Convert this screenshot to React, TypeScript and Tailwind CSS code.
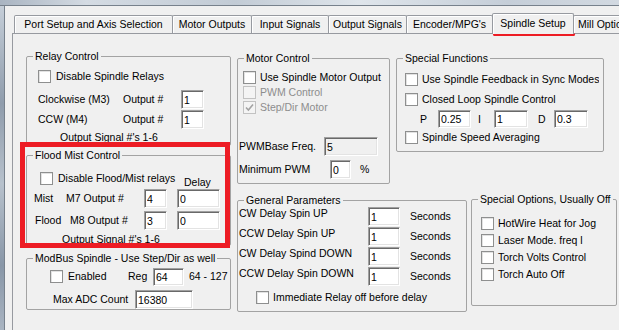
import type { ReactNode } from "react";

const TABS = [
  { label: "Port Setup and Axis Selection", cls: "w-[159px]" },
  { label: "Motor Outputs", cls: "w-[80px]" },
  { label: "Input Signals", cls: "w-[78px]" },
  { label: "Output Signals", cls: "w-[79px]" },
  { label: "Encoder/MPG's", cls: "w-[87px]" },
];

const DELAYS = ["CW Delay Spin UP", "CCW Delay Spin UP", "CW Delay Spind DOWN", "CCW Delay Spin DOWN"];

const SPECIAL_OPTIONS = ["HotWire Heat for Jog", "Laser Mode. freq l", "Torch Volts Control", "Torch Auto Off"];

function Check({ disabled = false, checked = false }: { disabled?: boolean; checked?: boolean }) {
  return (
    <span
      className={`flex h-[13px] w-[13px] shrink-0 items-center justify-center border ${
        disabled ? "border-[#c2c2c2] bg-[#f4f4f4]" : "border-[#8e8f8f] bg-white shadow-[inset_1px_1px_0_#e2e2e2]"
      }`}
    >
      {checked && (
        <svg width="9" height="9" viewBox="0 0 9 9">
          <path d="M1 4.5 3.4 7 8 1.5" fill="none" stroke="#a3a3a3" strokeWidth="1.6" />
        </svg>
      )}
    </span>
  );
}

function CheckRow({ label, disabled = false, checked = false, clip = false }: { label: string; disabled?: boolean; checked?: boolean; clip?: boolean }) {
  return (
    <div className="flex h-[13px] items-center">
      <Check disabled={disabled} checked={checked} />
      <span className={`ml-[4px] whitespace-nowrap ${disabled ? "text-[#8d8d8d]" : ""} ${clip ? "max-w-[181px] overflow-hidden" : ""}`}>{label}</span>
    </div>
  );
}

function Field({ value, className, disabled = false }: { value: string; className: string; disabled?: boolean }) {
  return (
    <input
      readOnly
      defaultValue={value}
      className={`shrink-0 border border-b-white border-l-[#a0a0a0] border-r-white border-t-[#a0a0a0] px-[2px] text-[10.5px] leading-[13px] text-black shadow-[inset_1px_1px_0_#696969,inset_-1px_-1px_0_#e3e3e3] outline-none ${
        disabled ? "bg-[#f0f0f0]" : "bg-white"
      } ${className}`}
    />
  );
}

function Group({ title, className, children }: { title: string; className: string; children?: ReactNode }) {
  return (
    <fieldset className={`min-w-0 shrink-0 rounded-[2px] border border-[#a3a3a3] ${className}`}>
      <legend className="ml-[6px] px-[2px] leading-[13px] whitespace-nowrap">{title}</legend>
      {children}
    </fieldset>
  );
}

export default function App() {
  return (
    <div className="relative h-[330px] w-[619px] overflow-hidden bg-[#f0f0f0] font-['Liberation_Sans',Arial,sans-serif] text-[10.5px] leading-[13px] text-black">
      <div className="h-[5px] bg-[linear-gradient(90deg,#a9b4c1,#d4dbe3_14%,#c2cbd5_38%,#dfe5eb_58%,#c5ced8_82%,#d2d9e1)]" />
      <div className="h-px bg-[#77818c]" />
      <div className="flex h-[324px]">
        <div className="w-[4px] bg-[linear-gradient(180deg,#c5ced8,#8f9cac_30%,#b7c1cc_55%,#8896a7_80%,#a9b4c1)]" />
        <div className="w-px bg-[#77818c]" />
        <div className="min-w-0 flex-1">
          {/* tab strip */}
          <div className="ml-[9px] mt-[7px] flex h-[20px] items-end whitespace-nowrap">
            {TABS.map((tab) => (
              <div
                key={tab.label}
                className={`-mr-px flex h-[18px] shrink-0 items-center justify-center rounded-t-[2px] border border-b-0 border-[#979aa0] bg-[#f0f0f0] shadow-[inset_1px_1px_0_#ffffff] ${tab.cls}`}
              >
                {tab.label}
              </div>
            ))}
            <div className="relative z-10 -mb-px flex h-[21px] w-[82px] shrink-0 items-center justify-center rounded-t-[2px] border border-b-0 border-[#979aa0] bg-[#f0f0f0] pb-px shadow-[inset_1px_1px_0_#ffffff]">
              Spindle Setup
            </div>
            <div className="-ml-px flex h-[18px] w-[90px] shrink-0 items-center rounded-t-[2px] border border-b-0 border-[#979aa0] bg-[#f0f0f0] pl-[4px] shadow-[inset_1px_1px_0_#ffffff]">
              Mill Options
            </div>
          </div>

          {/* tab page */}
          <div className="ml-[7px] h-[300px] border-l border-t border-[#979aa0]">
            <div className="flex pl-[13px]">
              {/* left column */}
              <div className="mt-[16px] flex w-[205px] shrink-0 flex-col">
                <Group title="Relay Control" className="h-[96px] w-[205px]">
                  <div className="ml-[11px] mt-[7px] flex items-center">
                    <Check />
                    <span className="ml-[5px]">Disable Spindle Relays</span>
                  </div>
                  <div className="ml-[11px] mt-[7px] flex h-[19px] items-center">
                    <span className="w-[85px]">Clockwise (M3)</span>
                    <span className="w-[58px]">Output #</span>
                    <Field value="1" className="h-[19px] w-[23px]" />
                  </div>
                  <div className="ml-[11px] mt-px flex h-[19px] items-center">
                    <span className="w-[85px]">CCW (M4)</span>
                    <span className="w-[58px]">Output #</span>
                    <Field value="1" className="h-[19px] w-[23px]" />
                  </div>
                  <div className="ml-[33px] mt-[2px]">Output Signal #'s 1-6</div>
                </Group>

                <Group title="Flood Mist Control" className="mt-[3px] h-[97px] w-[205px]">
                  <div className="flex h-[27px] items-start">
                    <span className="ml-[13px] mt-[10px]">
                      <Check />
                    </span>
                    <span className="ml-[5px] mt-[10px] w-[126px] whitespace-nowrap">Disable Flood/Mist relays</span>
                    <span className="mt-[14px]">Delay</span>
                  </div>
                  <div className="flex h-[19px] items-center">
                    <span className="ml-[7px] w-[32px]">Mist</span>
                    <span className="w-[78px]">M7 Output #</span>
                    <Field value="4" className="h-[19px] w-[23px]" />
                    <Field value="0" className="ml-[10px] h-[19px] w-[43px]" />
                  </div>
                  <div className="mt-[3px] flex h-[19px] items-center">
                    <span className="ml-[8px] w-[35px]">Flood</span>
                    <span className="w-[74px]">M8 Output #</span>
                    <Field value="3" className="h-[19px] w-[23px]" />
                    <Field value="0" className="ml-[10px] h-[19px] w-[43px]" />
                  </div>
                  <div className="ml-[35px] mt-[3px]">Output Signal #'s 1-6</div>
                </Group>

                <Group title="ModBus Spindle - Use Step/Dir as well" className="mt-[6px] h-[58px] w-[205px]">
                  <div className="mt-[2px] flex h-[19px] items-center">
                    <span className="ml-[23px]">
                      <Check />
                    </span>
                    <span className="ml-[5px] w-[60px]">Enabled</span>
                    <span className="w-[25px]">Reg</span>
                    <Field value="64" className="h-[18px] w-[31px]" />
                    <span className="ml-[5px]">64 - 127</span>
                  </div>
                  <div className="mt-[4px] flex h-[19px] items-center">
                    <span className="ml-[26px] w-[82px]">Max ADC Count</span>
                    <Field value="16380" className="h-[19px] w-[58px]" />
                  </div>
                </Group>
              </div>

              {/* right side */}
              <div className="ml-[6px] mt-[18px] flex shrink-0 flex-col">
                <div className="flex items-start">
                  <Group title="Motor Control" className="h-[132px] w-[153px]">
                    <div className="ml-[5px] mt-[6px] flex flex-col gap-[2px]">
                      <CheckRow label="Use Spindle Motor Output" />
                      <CheckRow label="PWM Control" disabled />
                      <CheckRow label="Step/Dir Motor" disabled checked />
                    </div>
                    <div className="mt-[23px] flex h-[19px] items-center">
                      <span className="ml-px w-[85px]">PWMBase Freq.</span>
                      <Field value="5" disabled className="h-[19px] w-[54px]" />
                    </div>
                    <div className="mt-[4px] flex h-[19px] items-center">
                      <span className="ml-px w-[91px]">Minimum PWM</span>
                      <Field value="0" className="h-[19px] w-[21px]" />
                      <span className="ml-[9px]">%</span>
                    </div>
                  </Group>

                  <Group title="Special Functions" className="ml-[6px] h-[100px] w-[208px]">
                    <div className="ml-[8px] mt-[8px]">
                      <CheckRow label="Use Spindle Feedback in Sync Modes" clip />
                      <div className="mt-[7px]">
                        <CheckRow label="Closed Loop Spindle Control" />
                      </div>
                    </div>
                    <div className="mt-[4px] flex h-[18px] items-center">
                      <span className="ml-[23px] w-[18px]">P</span>
                      <Field value="0.25" className="h-[18px] w-[33px]" />
                      <span className="ml-[7px] w-[16px]">I</span>
                      <Field value="1" className="h-[18px] w-[34px]" />
                      <span className="ml-[10px] w-[16px]">D</span>
                      <Field value="0.3" className="h-[18px] w-[34px]" />
                    </div>
                    <div className="ml-[8px] mt-[3px]">
                      <CheckRow label="Spindle Speed Averaging" />
                    </div>
                  </Group>
                </div>

                <div className="mt-[10px] flex items-start">
                  <Group title="General Parameters" className="h-[118px] w-[230px]">
                    {DELAYS.map((label) => (
                      <div key={label} className="flex h-[20px] items-start">
                        <span className="ml-px w-[129px] whitespace-nowrap">{label}</span>
                        <Field value="1" className="h-[19px] w-[32px]" />
                        <span className="ml-[10px] mt-[3px]">Seconds</span>
                      </div>
                    ))}
                    <div className="ml-[18px] mt-[4px]">
                      <CheckRow label="Immediate Relay off before delay" />
                    </div>
                  </Group>

                  <Group title="Special Options, Usually Off" className="-mt-px ml-[4px] h-[113px] w-[146px]">
                    <div className="ml-[9px] mt-[11px] flex flex-col gap-[4px]">
                      {SPECIAL_OPTIONS.map((label) => (
                        <CheckRow key={label} label={label} />
                      ))}
                    </div>
                  </Group>
                </div>
              </div>
            </div>
          </div>
        </div>
      </div>

      {/* red markup drawn over the dialog */}
      <div className="absolute left-[493px] top-[33px] h-[3px] w-[82px] rounded-full bg-[#ed1c24]" />
      <div className="absolute left-[20px] top-[142px] h-[106px] w-[210px] border-[5px] border-[#ed1c24]" />
    </div>
  );
}
